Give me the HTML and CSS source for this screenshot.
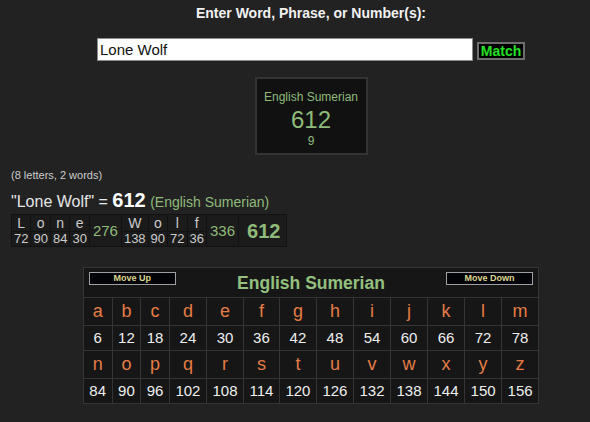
FILE: index.html
```html
<!DOCTYPE html>
<html lang="en">
<head>
    <meta charset="UTF-8">
    <title>Gematria Calculator</title>
    <link rel="stylesheet" href="styles.css">
</head>
<body>
    <div class="top">
        <h3 class="prompt">Enter Word, Phrase, or Number(s):</h3>
        <div class="entry">
            <input type="text" class="phrase-input" value="Lone Wolf">
            <button class="match-btn">Match</button>
        </div>
        <div class="result-box">
            <div class="result-name">English Sumerian</div>
            <div class="result-value">612</div>
            <div class="result-reduced">9</div>
        </div>
    </div>

    <div class="summary">
        <p class="count">(8 letters, 2 words)</p>
        <p class="phrase">"Lone Wolf" = <b>612</b> <span class="cipher-name">(English Sumerian)</span></p>
        <table class="breakdown">
            <tr class="b-letters">
                <td>L</td><td>o</td><td>n</td><td>e</td>
                <td rowspan="2" class="word-sum">276</td>
                <td>W</td><td>o</td><td>l</td><td>f</td>
                <td rowspan="2" class="word-sum">336</td>
                <td rowspan="2" class="total-sum">612</td>
            </tr>
            <tr class="b-values">
                <td>72</td><td>90</td><td>84</td><td>30</td>
                <td>138</td><td>90</td><td>72</td><td>36</td>
            </tr>
        </table>
    </div>

    <div class="chart-wrap">
        <table class="chart">
            <tr>
                <td colspan="13" class="chart-head">
                    <div class="head-inner">
                        <button class="move-btn">Move Up</button>
                        <span class="chart-title">English Sumerian</span>
                        <button class="move-btn">Move Down</button>
                    </div>
                </td>
            </tr>
            <tr class="c-letters">
                <td>a</td><td>b</td><td>c</td><td>d</td><td>e</td><td>f</td><td>g</td><td>h</td><td>i</td><td>j</td><td>k</td><td>l</td><td>m</td>
            </tr>
            <tr class="c-values">
                <td>6</td><td>12</td><td>18</td><td>24</td><td>30</td><td>36</td><td>42</td><td>48</td><td>54</td><td>60</td><td>66</td><td>72</td><td>78</td>
            </tr>
            <tr class="c-letters">
                <td>n</td><td>o</td><td>p</td><td>q</td><td>r</td><td>s</td><td>t</td><td>u</td><td>v</td><td>w</td><td>x</td><td>y</td><td>z</td>
            </tr>
            <tr class="c-values">
                <td>84</td><td>90</td><td>96</td><td>102</td><td>108</td><td>114</td><td>120</td><td>126</td><td>132</td><td>138</td><td>144</td><td>150</td><td>156</td>
            </tr>
        </table>
    </div>
</body>
</html>
```

FILE: styles.css
```css
body {
    margin: 0;
    background-color: #222222;
    color: #dddddd;
    font-family: "Liberation Sans", Arial, sans-serif;
}
.top {
    padding-left: 32px;
    text-align: center;
}
.prompt {
    margin: 0;
    padding-top: 5px;
    font-size: 14px;
    line-height: 16px;
    color: #f2f2f2;
}
.entry {
    margin-top: 17px;
    display: flex;
    justify-content: center;
    align-items: flex-end;
    gap: 4px;
}
.phrase-input {
    width: 376px;
    height: 23px;
    box-sizing: border-box;
    border: 1px solid #8a8a8a;
    padding: 0 2px;
    font-family: "Liberation Sans", Arial, sans-serif;
    font-size: 15px;
    color: #111111;
    background-color: #ffffff;
}
.match-btn {
    width: 48px;
    height: 18px;
    box-sizing: border-box;
    margin-bottom: 1px;
    padding: 0;
    border: 2px solid #6e6e6e;
    background-color: #000000;
    color: #26e026;
    font-family: "Liberation Sans", Arial, sans-serif;
    font-weight: bold;
    font-size: 14px;
    line-height: 14px;
}
.result-box {
    width: 113px;
    height: 78px;
    box-sizing: border-box;
    margin: 16px auto 0;
    padding-top: 10px;
    border: 2px solid #333333;
    background-color: #111111;
    color: #8fbb7a;
}
.result-name {
    font-size: 12px;
    line-height: 16px;
}
.result-value {
    margin-top: 2px;
    font-size: 24px;
    line-height: 26px;
}
.result-reduced {
    margin-top: 1px;
    font-size: 12px;
    line-height: 14px;
}
.summary {
    padding-left: 11px;
}
.count {
    margin: 13px 0 0;
    font-size: 11px;
    line-height: 14px;
    color: #cccccc;
}
.phrase {
    margin: 7px 0 0;
    font-size: 16px;
    line-height: 22px;
    color: #e6e6e6;
}
.phrase b {
    font-size: 20px;
    color: #ffffff;
}
.cipher-name {
    font-size: 14px;
    color: #8fbb7a;
}
.breakdown {
    margin-top: 1px;
    border-spacing: 1px;
    background-color: #121212;
    text-align: center;
}
.breakdown td {
    padding: 0 2px;
    background-color: #1b1b1b;
    color: #cccccc;
}
.b-letters td {
    font-size: 14px;
    line-height: 16px;
}
.b-values td {
    font-size: 13px;
    line-height: 14px;
}
.breakdown .word-sum {
    padding: 0 3px;
    font-size: 15px;
    color: #8fbb7a;
}
.breakdown .total-sum {
    padding: 0 6px 0 8px;
    font-size: 20px;
    font-weight: bold;
    color: #8fbb7a;
}
.chart-wrap {
    padding-left: 32px;
    margin-top: 20px;
}
.chart {
    margin: 0 auto;
    border-collapse: collapse;
    background-color: #161616;
    text-align: center;
}
.chart td {
    border: 1px solid #353535;
    padding: 0 5.5px;
}
.chart .chart-head {
    padding: 0;
}
.head-inner {
    height: 29px;
    box-sizing: border-box;
    padding: 4px 5px 0;
    display: flex;
    justify-content: space-between;
    align-items: flex-start;
}
.move-btn {
    width: 87px;
    height: 13px;
    box-sizing: border-box;
    padding: 0;
    border: 1px solid #a0a0a0;
    background-color: #03030a;
    color: #dcd68a;
    font-family: "Liberation Sans", Arial, sans-serif;
    font-weight: bold;
    font-size: 9px;
    line-height: 11px;
}
.chart-title {
    font-size: 17.5px;
    font-weight: bold;
    line-height: 22px;
    color: #93c07e;
}
.c-letters td {
    font-size: 18px;
    line-height: 27px;
    color: #e47d45;
}
.c-values td {
    font-size: 15px;
    line-height: 24px;
    color: #eeeeee;
}
```
